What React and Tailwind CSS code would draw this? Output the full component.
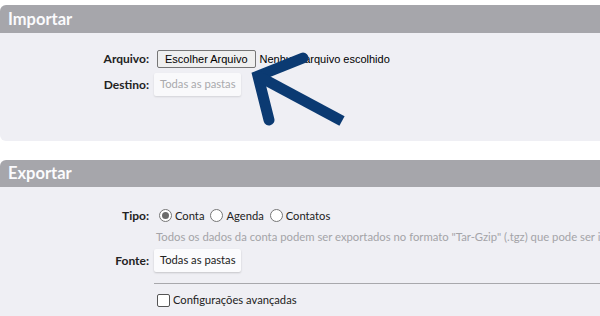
import React from 'react';

const ui = { fontFamily: 'Lato, "Open Sans", sans-serif' };
const native = { fontFamily: '"Liberation Sans", Arial, sans-serif' };

function Radio({ checked, label }) {
  return (
    <label className="flex items-center">
      <span className="ml-[5px] mr-[3px] flex h-[13px] w-[13px] items-center justify-center rounded-full border border-[#767676] bg-white">
        {checked && <span className="h-[7px] w-[7px] rounded-full bg-[#6b6b6b]" />}
      </span>
      <span className="text-[11.2px] text-[#222]">{label}</span>
    </label>
  );
}

function Header({ title, h }) {
  return (
    <div className={`${h} flex items-center rounded-tl-[6px] bg-[#a6a6ab] pl-[8px]`}>
      <span className="text-[16.5px] font-bold text-[#fbfbfd]" style={ui}>{title}</span>
    </div>
  );
}

export default function App() {
  return (
    <div className="relative h-[316px] w-[600px] overflow-hidden bg-white pt-[5px]" style={ui}>
      {/* Importar */}
      <section>
        <Header title="Importar" h="h-[28px]" />
        <div className="h-[108px] rounded-bl-[6px] bg-[#efeff4] pt-[17px]">
          <div className="grid grid-cols-[149px_1fr] gap-x-[5px] gap-y-[5px]">
            <div className="flex h-[18px] items-center justify-end text-[12px] font-bold text-[#222]">Arquivo:</div>
            <div className="flex h-[18px] items-center" style={native}>
              <button className="ml-[3px] h-[18px] rounded-[2px] border border-[#767676] bg-[#efefef] px-[7px] text-[11px] text-black">Escolher Arquivo</button>
              <span className="ml-[4px] text-[11px] text-black">Nenhum arquivo escolhido</span>
            </div>
            <div className="flex h-[23px] items-center justify-end text-[12px] font-bold text-[#222]">Destino:</div>
            <div className="flex h-[23px] items-center">
              <button className="h-[23px] rounded-[2px] bg-[#f9f9fb] px-[6px] text-[11.2px] text-[#a9a9ad] shadow-[0_1px_2px_rgba(0,0,0,0.12)]">Todas as pastas</button>
            </div>
          </div>
        </div>
      </section>

      <div className="h-[19px]" />

      {/* Exportar */}
      <section>
        <Header title="Exportar" h="h-[27px]" />
        <div className="h-[140px] bg-[#efeff4] pt-[20px]">
          <div className="grid grid-cols-[149px_1fr] gap-x-[5px]">
            <div className="flex h-[18px] items-center justify-end text-[12px] font-bold text-[#222]">Tipo:</div>
            <div className="flex h-[18px] items-center gap-[1px]">
              <Radio checked label="Conta" />
              <Radio label="Agenda" />
              <Radio label="Contatos" />
            </div>

            <div />
            <div className="mt-[4px] h-[16px] overflow-hidden whitespace-nowrap pl-[2px] text-[11.3px] leading-[16px] text-[#a4a4a8]">
              Todos os dados da conta podem ser exportados no formato "Tar-Gzip" (.tgz) que pode ser importado posteriormente
            </div>

            <div className="mt-[4px] flex h-[23px] items-center justify-end text-[12px] font-bold text-[#222]">Fonte:</div>
            <div className="mt-[4px] flex h-[23px] items-center">
              <button className="h-[23px] rounded-[2px] bg-[#fbfbfd] px-[6px] text-[11.2px] text-[#222] shadow-[0_1px_2px_rgba(0,0,0,0.18)]">Todas as pastas</button>
            </div>

            <div />
            <div className="mt-[11px] border-t border-[#a8a8ac]" />

            <div />
            <label className="mt-[8px] flex h-[16px] items-center">
              <span className="ml-[3px] mr-[3px] h-[13px] w-[13px] rounded-[2px] border border-[#555] bg-white" />
              <span className="text-[11.2px] text-[#222]">Configurações avançadas</span>
            </label>
          </div>
        </div>
      </section>

      {/* arrow annotation */}
      <svg className="pointer-events-none absolute left-0 top-0" width="600" height="316" viewBox="0 0 600 316">
        <polyline points="303,58 258,76 269,120" fill="none" stroke="#0b3a72" strokeWidth="11" strokeLinecap="round" strokeLinejoin="miter" />
        <line x1="258" y1="76" x2="342" y2="121" stroke="#0b3a72" strokeWidth="11" />
      </svg>
    </div>
  );
}
